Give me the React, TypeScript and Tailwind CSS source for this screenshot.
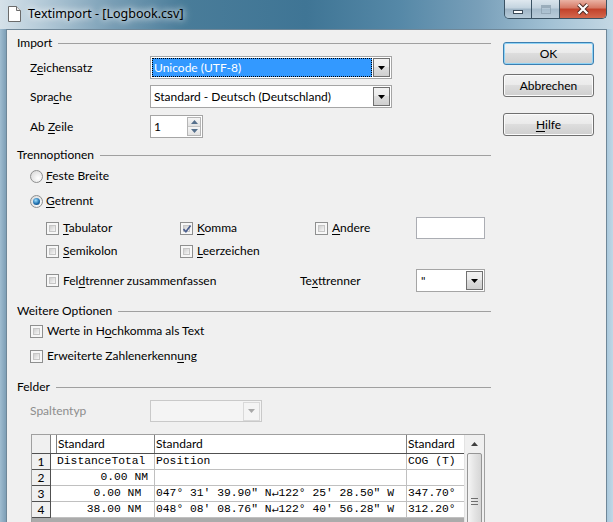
import React from "react";

// underlined mnemonic letter
const U = ({ c }: { c: string }) => (
  <span className="underline decoration-1 underline-offset-[2px]">{c}</span>
);

function DropArrow({ disabled = false }: { disabled?: boolean }) {
  return (
    <div
      className={`w-[17px] h-[19px] mr-[1px] shrink-0 flex items-center justify-center border ${
        disabled
          ? "border-[#d9d9d9] bg-[#f4f4f4]"
          : "border-[#707070] bg-[linear-gradient(#f2f2f2,#ebebeb_45%,#dddddd_50%,#cfcfcf)]"
      }`}
    >
      <svg width="7" height="4" viewBox="0 0 7 4">
        <path d="M0 0H7L3.5 4Z" fill={disabled ? "#a8a8a8" : "#000"} />
      </svg>
    </div>
  );
}

function Check({ checked = false }: { checked?: boolean }) {
  return (
    <div className="relative w-[13px] h-[13px] shrink-0 border border-[#8e8f8f] bg-[#f7f7f7] p-[2px]">
      <div className="w-full h-full border border-[#c6c6c6] bg-[linear-gradient(135deg,#cfcfcf,#f7f7f7)]" />
      {checked && (
        <svg className="absolute left-[1px] top-[1px]" width="10" height="10" viewBox="0 0 10 10">
          <path d="M1.5 5.2L3.9 7.8L8.6 1.6" fill="none" stroke="#4b5f8f" strokeWidth="1.7" />
        </svg>
      )}
    </div>
  );
}

function Radio({ checked = false }: { checked?: boolean }) {
  return (
    <div className="w-[13px] h-[13px] shrink-0 rounded-full border border-[#8e8f8f] bg-[radial-gradient(circle_at_65%_65%,#ffffff,#d4d4d4)] flex items-center justify-center">
      {checked && (
        <div className="w-[7px] h-[7px] rounded-full bg-[radial-gradient(circle_at_40%_35%,#9fe0ff,#1f6fae_55%,#0d3b66)]" />
      )}
    </div>
  );
}

function Btn({ children, def = false }: { children: React.ReactNode; def?: boolean }) {
  return (
    <div
      className={`h-[23px] w-[91px] rounded-[3px] border flex items-center justify-center bg-[linear-gradient(#f2f2f2,#ebebeb_45%,#dddddd_50%,#cfcfcf)] ${
        def
          ? "border-[#3c7fb1] shadow-[inset_0_0_0_1px_#8fd3f5]"
          : "border-[#707070] shadow-[inset_0_0_0_1px_#fbfbfb]"
      }`}
    >
      {children}
    </div>
  );
}

function Section({ title, className = "" }: { title: string; className?: string }) {
  return (
    <div className={`flex items-center h-[20px] pl-[10px] ${className}`}>
      <span>{title}</span>
      <div className="flex-1 ml-[6px] border-t border-[#a0a0a0]" />
    </div>
  );
}

const rows = [
  { n: "1", a: "DistanceTotal", left: true, b: "Position", c: "COG (T)" },
  { n: "2", a: "0.00 NM", left: false, b: "", c: "" },
  { n: "3", a: "0.00 NM ", left: false, b: "047° 31' 39.90\" N↵122° 25' 28.50\" W", c: "347.70°" },
  { n: "4", a: "38.00 NM ", left: false, b: "048° 08' 08.76\" N↵122° 40' 56.28\" W", c: "312.20°" },
];

const App = () => {
  return (
    <div className="w-[613px] h-[522px] overflow-hidden font-['Lato',sans-serif] text-[12px] text-black bg-[linear-gradient(90deg,#d5e1e9_0%,#b4cad8_7%,#7a9fb6_18%,#497c99_30%,#3f7595_50%,#5588a7_65%,#789fb9_78%,#a3c2d5_90%,#c4d8e4_100%)]">
      {/* title bar */}
      <div className="h-[29px] flex items-start">
        <svg className="ml-[8px] mt-[6px]" width="13" height="16" viewBox="0 0 13 16">
          <path d="M0.5 0.5H8.5L12.5 4.5V15.5H0.5Z" fill="#fff" stroke="#6b6b6b" />
          <path d="M8.5 0.5V4.5H12.5" fill="#e8e8e8" stroke="#6b6b6b" />
        </svg>
        <span className="ml-[7px] mt-[5px] font-['Noto_Sans',sans-serif] text-[12.5px] [text-shadow:0_0_6px_#ffffff,0_0_10px_#ffffff]">
          Textimport - [Logbook.csv]
        </span>
        <div className="ml-auto mr-[6px] flex h-[19px] rounded-b-[5px] border border-t-0 border-[#3a5263] overflow-hidden">
          <div className="w-[27px] flex items-center justify-center bg-[linear-gradient(#dfe8ef,#c3d3df_45%,#9fb5c6_50%,#b7cbd9)] border-r border-[#3a5263]">
            <div className="w-[10px] h-[4px] mt-[5px] bg-white border border-[#3a4a58]" />
          </div>
          <div className="w-[28px] flex items-center justify-center bg-[linear-gradient(#d9e4ec,#c1d1dd_45%,#a6bccc_50%,#b9ccda)] border-r border-[#3a5263]">
            <div className="w-[10px] h-[9px] border border-[#8ea2b1] border-t-[3px] opacity-80" />
          </div>
          <div className="w-[46px] flex items-center justify-center bg-[linear-gradient(#eab2a4,#d57763_45%,#c2412a_50%,#d4684d)]">
            <svg width="14" height="12" viewBox="0 0 14 12">
              <path d="M2.5 1.5L11.5 10.5M11.5 1.5L2.5 10.5" stroke="#4a2a24" strokeWidth="4" />
              <path d="M2.5 1.5L11.5 10.5M11.5 1.5L2.5 10.5" stroke="#fff" strokeWidth="2.2" />
            </svg>
          </div>
        </div>
      </div>

      <div className="flex h-[493px]">
        <div className="w-[6px] bg-[linear-gradient(90deg,#9fbcd0,#7e9fb6)]" />
        <div className="w-[601px] border border-b-0 border-[#6f8798] bg-[#f0f0f0] flex">
          {/* main column */}
          <div className="w-[484px] shrink-0">
            <div className="flex items-center h-[26px] pl-[10px]">
              <span>Import</span>
              <div className="flex-1 ml-[6px] border-t border-[#a0a0a0]" />
            </div>

            <div className="flex items-center h-[23px] pl-[23px]">
              <span className="w-[120px]">Z<U c="e" />ichensatz</span>
              <div className="w-[242px] h-[23px] flex items-center border border-[#a5a5a5] bg-white">
                <div className="flex-1 h-[19px] ml-[1px] mr-[1px] bg-[#3399ff] outline-1 outline-dotted outline-black -outline-offset-1 text-white flex items-center pl-[2px]">
                  Unicode (UTF-8)
                </div>
                <DropArrow />
              </div>
            </div>

            <div className="flex items-center h-[23px] mt-[6px] pl-[23px]">
              <span className="w-[120px]">Spra<U c="c" />he</span>
              <div className="w-[242px] h-[23px] flex items-center border border-[#a5a5a5] bg-white">
                <div className="flex-1 pl-[3px]">Standard - Deutsch (Deutschland)</div>
                <DropArrow />
              </div>
            </div>

            <div className="flex items-center h-[23px] mt-[7px] pl-[23px]">
              <span className="w-[120px]">Ab <U c="Z" />eile</span>
              <div className="w-[53px] h-[23px] flex items-center border border-[#a5a5a5] bg-white">
                <div className="flex-1 pl-[3px]">1</div>
                <div className="w-[14px] h-[19px] mr-[1px] flex flex-col border border-[#b5b5b5]">
                  <div className="flex-1 flex items-center justify-center bg-[linear-gradient(#f6f6f6,#e2e2e2)] border-b border-[#c5c5c5]">
                    <svg width="7" height="4" viewBox="0 0 7 4"><path d="M0 4H7L3.5 0Z" fill="#56708c" /></svg>
                  </div>
                  <div className="flex-1 flex items-center justify-center bg-[linear-gradient(#f6f6f6,#e2e2e2)]">
                    <svg width="7" height="4" viewBox="0 0 7 4"><path d="M0 0H7L3.5 4Z" fill="#56708c" /></svg>
                  </div>
                </div>
              </div>
            </div>

            <Section title="Trennoptionen" className="mt-[7px]" />

            <div className="flex items-center h-[20px] mt-[1px] pl-[23px]">
              <Radio />
              <span className="ml-[3px]"><U c="F" />este Breite</span>
            </div>
            <div className="flex items-center h-[20px] mt-[5px] pl-[23px]">
              <Radio checked />
              <span className="ml-[3px]"><U c="G" />etrennt</span>
            </div>

            <div className="flex items-center h-[22px] mt-[6px] pl-[39px]">
              <div className="w-[134px] flex items-center">
                <Check />
                <span className="ml-[4px]"><U c="T" />abulator</span>
              </div>
              <div className="w-[135px] flex items-center">
                <Check checked />
                <span className="ml-[4px]"><U c="K" />omma</span>
              </div>
              <div className="w-[101px] flex items-center">
                <Check />
                <span className="ml-[4px]"><U c="A" />ndere</span>
              </div>
              <div className="w-[69px] h-[22px] border border-[#abadb3] bg-white" />
            </div>

            <div className="flex items-center h-[22px] mt-[1px] pl-[39px]">
              <div className="w-[134px] flex items-center">
                <Check />
                <span className="ml-[4px]"><U c="S" />emikolon</span>
              </div>
              <div className="flex items-center">
                <Check />
                <span className="ml-[4px]"><U c="L" />eerzeichen</span>
              </div>
            </div>

            <div className="flex items-center h-[23px] mt-[7px] pl-[39px]">
              <div className="w-[254px] flex items-center">
                <Check />
                <span className="ml-[4px]">Fel<U c="d" />trenner zusammenfassen</span>
              </div>
              <span className="w-[116px]">Te<U c="x" />ttrenner</span>
              <div className="w-[69px] h-[23px] flex items-center border border-[#a5a5a5] bg-white">
                <div className="flex-1 pl-[4px]">"</div>
                <DropArrow />
              </div>
            </div>

            <Section title="Weitere Optionen" className="mt-[9px]" />

            <div className="flex items-center h-[20px] pl-[23px]">
              <Check />
              <span className="ml-[4px]">Werte in H<U c="o" />chkomma als Text</span>
            </div>
            <div className="flex items-center h-[20px] mt-[5px] pl-[23px]">
              <Check />
              <span className="ml-[4px]">Erweiterte Zahlenerkenn<U c="u" />ng</span>
            </div>

            <Section title="Felder" className="mt-[11px]" />

            <div className="flex items-center h-[22px] mt-[3px] pl-[23px]">
              <span className="w-[120px] text-[#8d8d8d]">Spaltentyp</span>
              <div className="w-[112px] h-[22px] flex items-center border border-[#c9c9c9] bg-[#f4f4f4]">
                <div className="flex-1" />
                <DropArrow disabled />
              </div>
            </div>

            {/* preview table */}
            <div className="ml-[24px] mt-[12px] w-[454px] h-[100px] border border-b-0 border-[#a0a0a0] flex overflow-hidden">
              <div className="w-[432px] flex flex-col bg-[#ababab]">
                <div className="flex h-[19px] shrink-0 bg-white border-b border-[#505050]">
                  <div className="w-[19px] bg-[#f0f0f0] border-r border-[#808080]" />
                  <div className="w-[6px] border-r border-[#808080]" />
                  <div className="w-[98px] pl-[1px] border-r border-[#808080] leading-[18px]">Standard</div>
                  <div className="w-[252px] pl-[1px] border-r border-[#808080] leading-[18px]">Standard</div>
                  <div className="w-[57px] pl-[1px] leading-[18px]">Standard</div>
                </div>
                {rows.map((r) => (
                  <div key={r.n} className="flex h-[16px] shrink-0 font-['Liberation_Mono',monospace] text-[11.33px] leading-[15px] whitespace-pre">
                    <div className="w-[19px] bg-[#f0f0f0] border-r border-b border-[#505050] text-center font-['Lato',sans-serif] text-[12px]">
                      {r.n}
                    </div>
                    <div className={`w-[104px] bg-white border-r border-b border-[#c0c0c0] ${r.left ? "pl-[6px]" : "text-right pr-[6px]"}`}>
                      {r.a}
                    </div>
                    <div className="w-[252px] bg-white border-r border-b border-[#c0c0c0] pl-[1px]">{r.b}</div>
                    <div className="w-[57px] bg-white border-b border-[#c0c0c0] pl-[1px]">{r.c}</div>
                  </div>
                ))}
              </div>
              <div className="w-[20px] flex flex-col bg-[#f0f0f0] border-l border-[#e3e3e3]">
                <div className="h-[18px] shrink-0 flex items-center justify-center">
                  <svg width="7" height="4" viewBox="0 0 7 4"><path d="M0 4H7L3.5 0Z" fill="#404040" /></svg>
                </div>
                <div className="ml-[2px] w-[15px] flex-1 rounded-[2px] border border-[#969696] bg-[linear-gradient(90deg,#f5f5f5,#e4e4e4_50%,#d6d6d6)] flex flex-col items-center pt-[44px] gap-[2px]">
                  <div className="w-[7px] border-t border-[#6e6e6e]" />
                  <div className="w-[7px] border-t border-[#6e6e6e]" />
                  <div className="w-[7px] border-t border-[#6e6e6e]" />
                </div>
              </div>
            </div>
          </div>

          {/* buttons */}
          <div className="ml-[12px] pt-[12px] flex flex-col">
            <Btn def>OK</Btn>
            <div className="mt-[9px]">
              <Btn>Abbrechen</Btn>
            </div>
            <div className="mt-[16px]">
              <Btn>
                <span><U c="H" />ilfe</span>
              </Btn>
            </div>
          </div>
        </div>
        <div className="w-[6px] bg-[linear-gradient(90deg,#a9c8dc,#c1d8e6)]" />
      </div>
    </div>
  );
};

export default App;
